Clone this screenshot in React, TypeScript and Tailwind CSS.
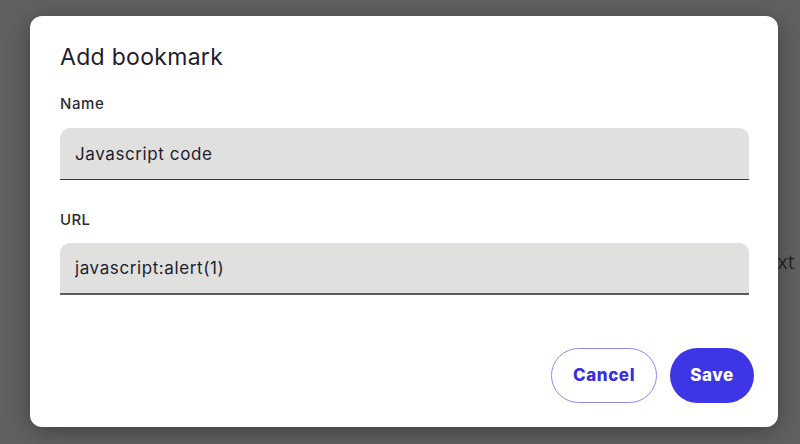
import React, { useState } from 'react';

export default function App() {
    const [name, setName] = useState('Javascript code');
    const [url, setUrl] = useState('javascript:alert(1)');

    return (
        <div className="relative w-[800px] h-[444px] overflow-hidden bg-[#616161] font-['Inter',sans-serif]">
            {/* page text peeking behind the dialog */}
            <div className="absolute left-[751px] top-[247px] text-[20px] text-[#262626] font-['Open_Sans',sans-serif] whitespace-nowrap">Next t</div>

            <div className="absolute left-[30px] top-[16px] w-[748px] h-[411px] bg-white rounded-[12px] shadow-[0_4px_24px_rgba(0,0,0,0.35)] pl-[30px] pr-[29px] pt-[26px] flex flex-col">
                <h2 className="text-[23px] leading-[30px] text-[#1e1c30] tracking-[0.3px]">Add bookmark</h2>

                <label className="mt-[22px] text-[15px] leading-[20px] font-medium text-[#2b2b33] tracking-[0.6px]">Name</label>
                <input
                    value={name}
                    onChange={(e) => setName(e.target.value)}
                    className="mt-[14px] h-[52px] w-full bg-[#e0e1df] rounded-t-[10px] border-b border-[#3a3a3a] px-[15px] text-[17px] tracking-[0.6px] text-[#1e1c30] outline-none"
                />

                <label className="mt-[30px] text-[15px] leading-[20px] font-medium text-[#2b2b33] tracking-[0.4px]">URL</label>
                <input
                    value={url}
                    onChange={(e) => setUrl(e.target.value)}
                    className="mt-[13px] h-[52px] w-full bg-[#e0e1df] rounded-t-[10px] border-b-2 border-[#5a5a5a] px-[15px] text-[17px] tracking-[0.6px] text-[#1e1c30] outline-none"
                />

                <div className="mt-[53px] flex justify-end gap-[13px] -mr-[5px]">
                    <button className="h-[55px] w-[106px] rounded-full border border-[#8f88f2] text-[#3a2ee0] text-[17px] font-extrabold tracking-[0.6px]">Cancel</button>
                    <button className="h-[55px] w-[84px] rounded-full bg-[#3d35e6] text-white text-[17px] font-extrabold tracking-[0.6px]">Save</button>
                </div>
            </div>
        </div>
    );
}
